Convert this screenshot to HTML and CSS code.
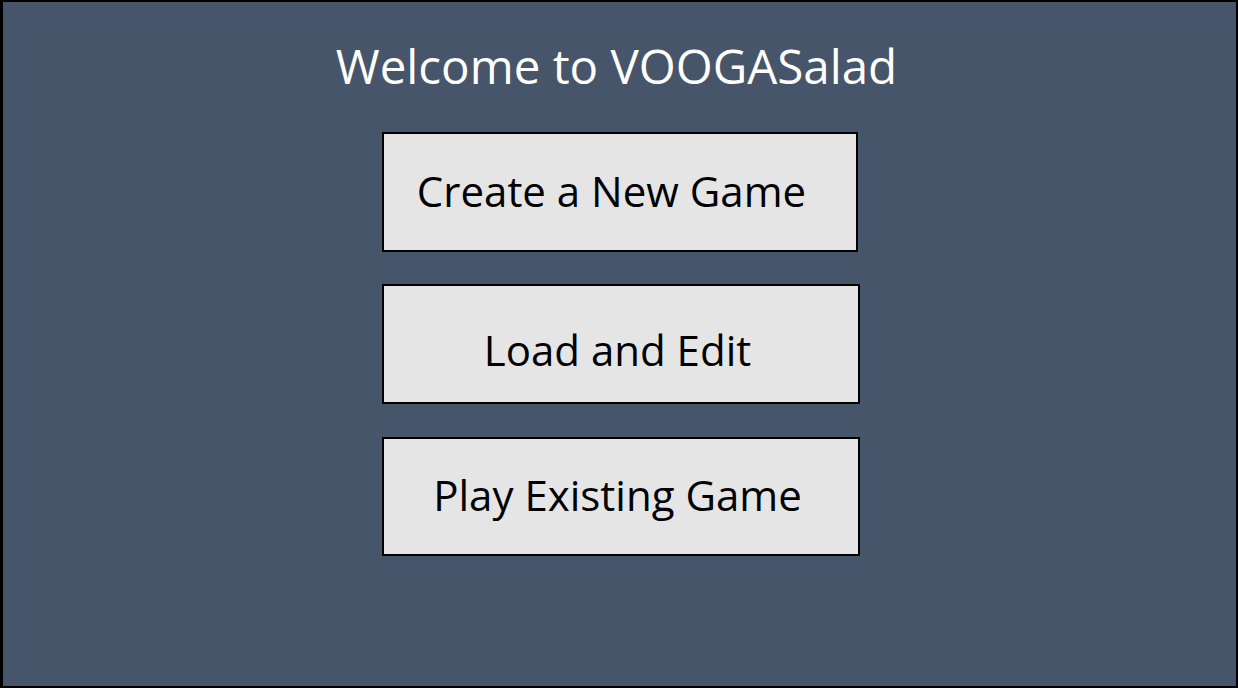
FILE: index.html
```html
<!DOCTYPE html>
<html>
<head>
<meta charset="utf-8">
<link rel="stylesheet" href="styles.css">
</head>
<body>
<div class="screen">
  <h1 class="title">Welcome to VOOGASalad</h1>
  <div class="menu">
    <div class="btn btn-create">Create a New Game</div>
    <div class="btn btn-load">Load and Edit</div>
    <div class="btn btn-play">Play Existing Game</div>
  </div>
</div>
</body>
</html>
```
FILE: styles.css
```css
html, body {
  margin: 0;
  padding: 0;
}
body {
  width: 1238px;
  height: 688px;
  font-family: "Open Sans", "Liberation Sans", sans-serif;
}
.screen {
  box-sizing: border-box;
  width: 1238px;
  height: 688px;
  background: #465569;
  border: 2px solid #000;
  border-left-width: 3px;
  display: flex;
  flex-direction: column;
  align-items: center;
}
.title {
  margin: 36px 6px 0 0;
  color: #fff;
  font-weight: 400;
  font-size: 47.5px;
  line-height: 56px;
  height: 56px;
}
.menu {
  margin-top: 38px;
  margin-left: 3px;
  display: flex;
  flex-direction: column;
  gap: 32px;
  align-items: flex-start;
}
.btn {
  box-sizing: border-box;
  width: 478px;
  height: 120px;
  background: #e5e5e5;
  border: 2px solid #000;
  color: #000;
  font-size: 42px;
  display: flex;
  align-items: center;
  justify-content: center;
  padding-right: 7px;
}
.btn-create {
  width: 476px;
  padding-right: 17px;
  padding-bottom: 3px;
}
.btn-load {
  padding-top: 11px;
}
.btn-play {
  height: 119px;
  margin-top: 1px;
  padding-bottom: 5px;
}
```
